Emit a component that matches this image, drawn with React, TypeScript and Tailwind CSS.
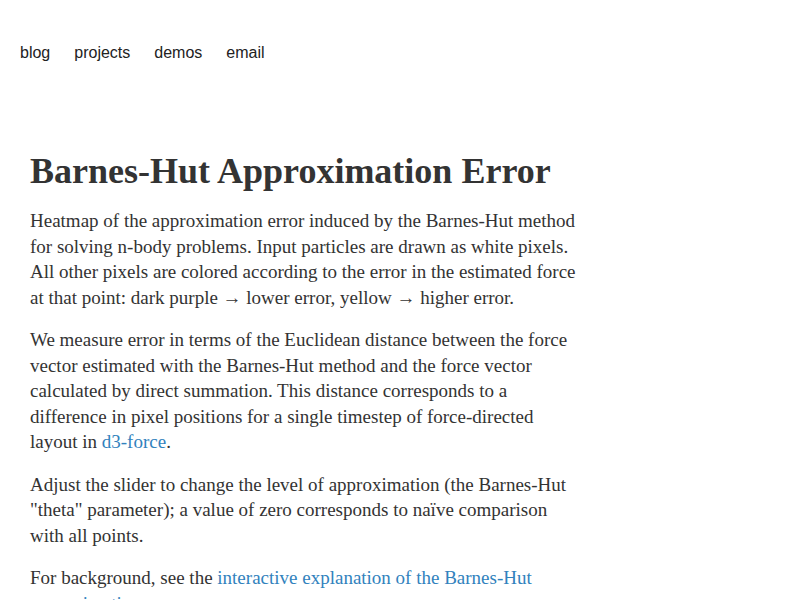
import React from "react";

const navLinks = ["blog", "projects", "demos", "email"];

const App: React.FC = () => {
  return (
    <div className="min-h-screen bg-white text-[#333]">
      {/* Top nav */}
      <nav className="flex gap-[24px] px-5 pt-[42px] font-['Liberation_Sans',Arial,sans-serif] text-base text-[#222]">
        {navLinks.map((link) => (
          <a key={link} href="#" className="leading-[22px]">
            {link}
          </a>
        ))}
      </nav>

      {/* Article */}
      <main className="px-[30px] pt-[87px] font-['Liberation_Serif','Times_New_Roman',serif]">
        <h1 className="text-[36px] font-bold leading-[40px] text-[#333]">
          Barnes-Hut Approximation Error
        </h1>

        <div className="mt-[17px] text-[19px] leading-[25.5px] text-[#333]">
          <p>
            Heatmap of the approximation error induced by the Barnes-Hut method
            <br />
            for solving n-body problems. Input particles are drawn as white pixels.
            <br />
            All other pixels are colored according to the error in the estimated force
            <br />
            at that point: dark purple → lower error, yellow → higher error.
          </p>

          <p className="mt-[17px]">
            We measure error in terms of the Euclidean distance between the force
            <br />
            vector estimated with the Barnes-Hut method and the force vector
            <br />
            calculated by direct summation. This distance corresponds to a
            <br />
            difference in pixel positions for a single timestep of force-directed
            <br />
            layout in{" "}
            <a href="#" className="text-[#3182bd]">
              d3-force
            </a>
            .
          </p>

          <p className="mt-[17px]">
            Adjust the slider to change the level of approximation (the Barnes-Hut
            <br />
            "theta" parameter); a value of zero corresponds to naïve comparison
            <br />
            with all points.
          </p>

          <p className="mt-[17px]">
            For background, see the{" "}
            <a href="#" className="text-[#3182bd]">
              interactive explanation of the Barnes-Hut
              <br />
              approximation
            </a>
            .
          </p>
        </div>
      </main>
    </div>
  );
};

export default App;
